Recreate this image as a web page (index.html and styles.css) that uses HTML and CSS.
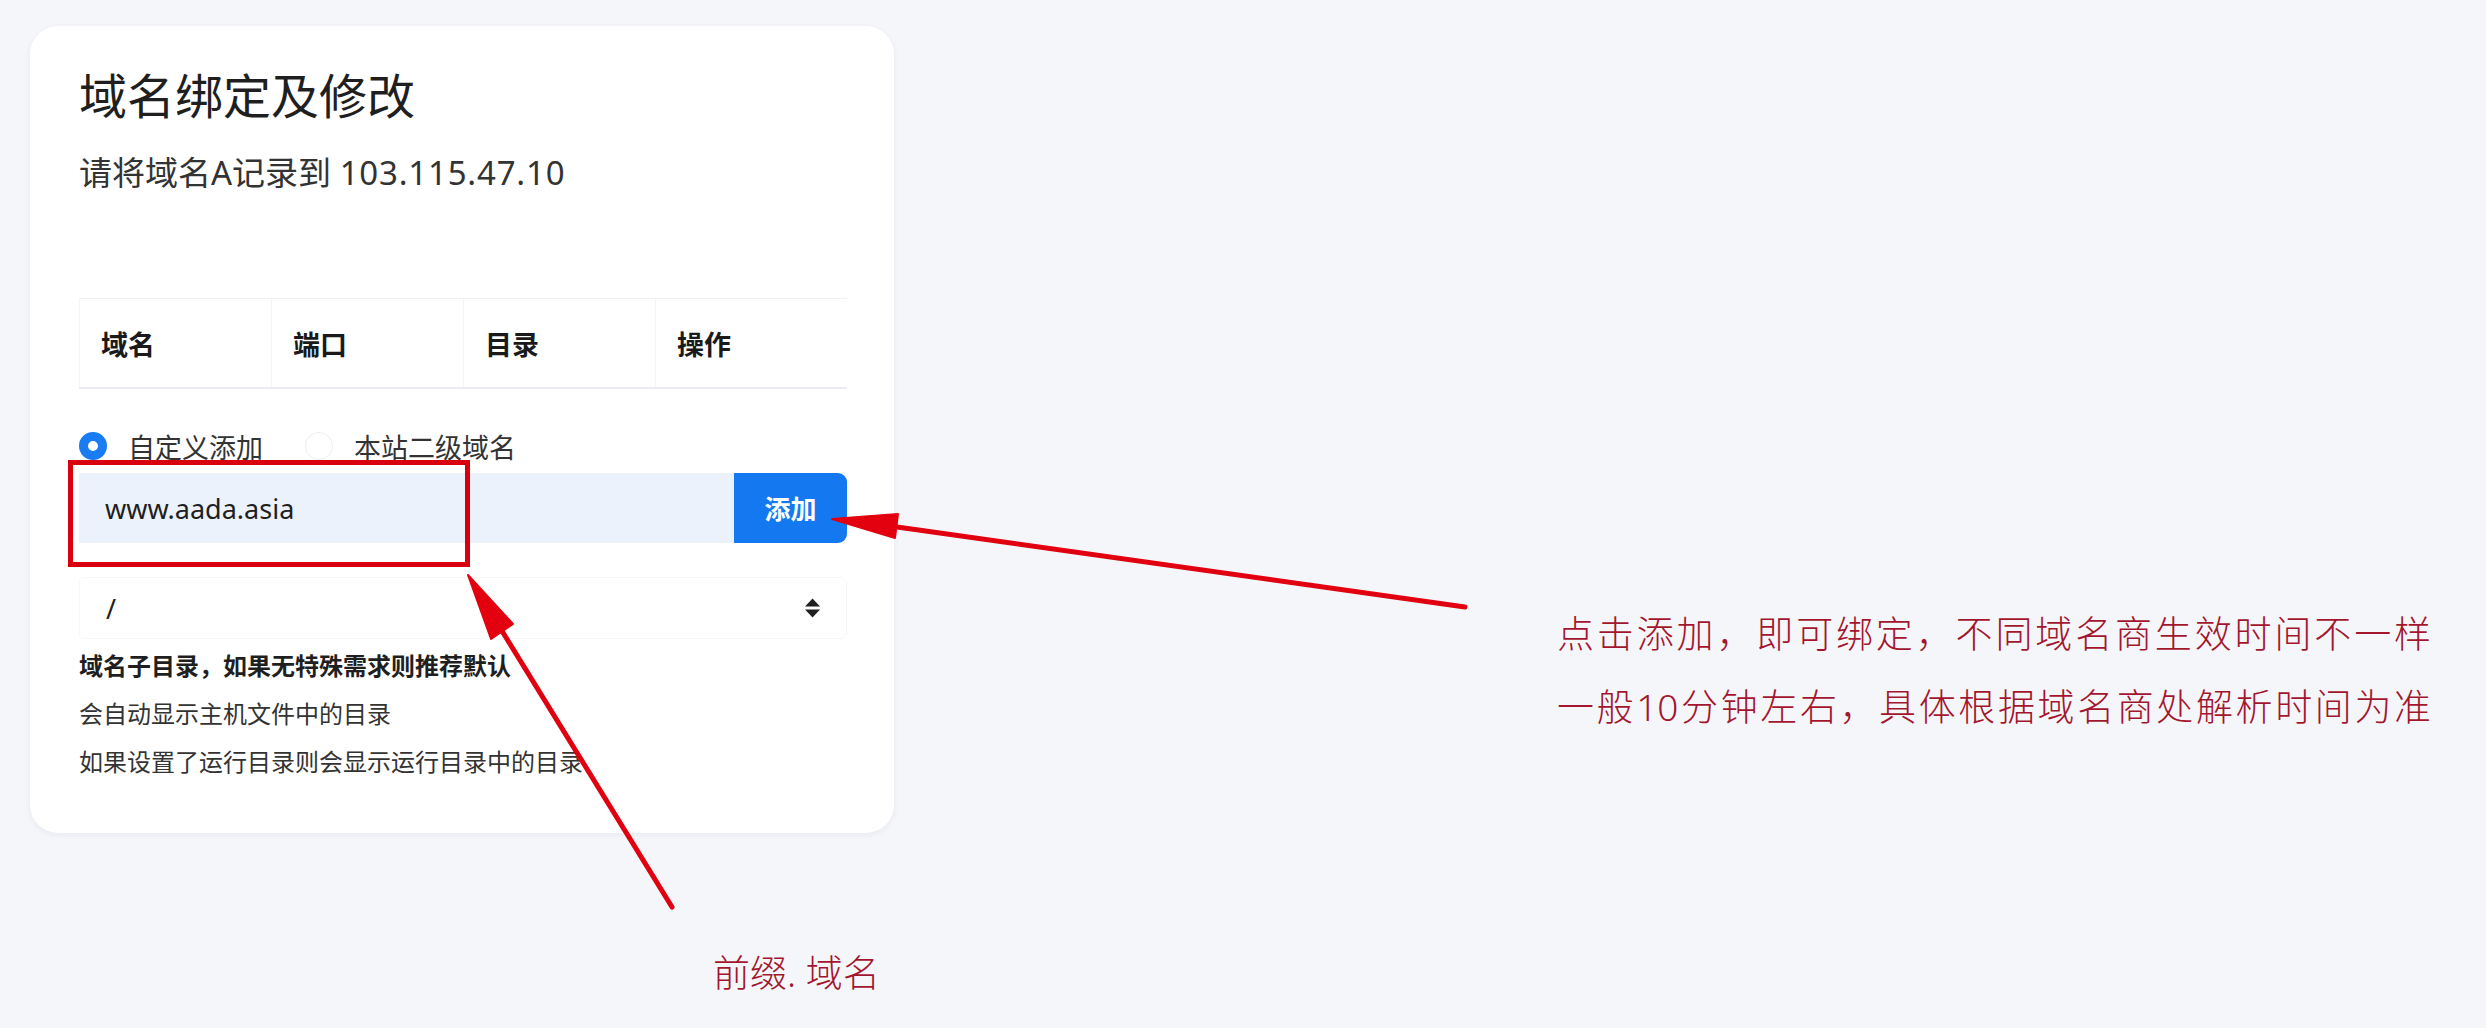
FILE: index.html
```html
<!DOCTYPE html>
<html lang="zh-CN">
<head>
    <meta charset="UTF-8">
    <meta name="viewport" content="width=device-width, initial-scale=1.0">
    <title>域名绑定及修改</title>
    <link rel="stylesheet" href="styles.css">
</head>
<body>
    <div class="card">
        <h1 class="title">域名绑定及修改</h1>
        <p class="subtitle">请将域名A记录到 <span class="ip">103.115.47.10</span></p>
        <div class="table-head">
            <div class="th">域名</div>
            <div class="th">端口</div>
            <div class="th">目录</div>
            <div class="th">操作</div>
        </div>
        <div class="radios">
            <label class="radio checked"><span class="dot"></span>自定义添加</label>
            <label class="radio"><span class="dot"></span>本站二级域名</label>
        </div>
        <div class="add-row">
            <div class="input">www.aada.asia</div>
            <div class="button">添加</div>
        </div>
        <div class="select">
            <span>/</span>
            <svg class="caret" width="17" height="20" viewBox="0 0 17 20">
                <path d="M1 8.5 L8.5 0.5 L16 8.5 Z" fill="#1f1f1f"/>
                <path d="M1 11.5 L16 11.5 L8.5 19.5 Z" fill="#1f1f1f"/>
            </svg>
        </div>
        <div class="help">
            <p class="strong">域名子目录，如果无特殊需求则推荐默认</p>
            <p>会自动显示主机文件中的目录</p>
            <p>如果设置了运行目录则会显示运行目录中的目录</p>
        </div>
    </div>

    <!-- annotations drawn on top of the screenshot -->
    <div class="mark-box"></div>
    <svg class="arrows" width="2486" height="1028" viewBox="0 0 2486 1028">
        <g stroke="#e0000f" stroke-width="5" stroke-linecap="round" fill="none">
            <line x1="1465" y1="607" x2="890" y2="526"/>
            <line x1="672" y1="907" x2="502" y2="631"/>
        </g>
        <g fill="#e3000f" stroke="#e3000f" stroke-width="2" stroke-linejoin="round">
            <polygon points="832,519 898,514 895,538"/>
            <polygon points="468,575 491,639 513,624"/>
        </g>
    </svg>
    <div class="note note-right">
        <p>点击添加，即可绑定，不同域名商生效时间不一样</p>
        <p>一般10分钟左右，具体根据域名商处解析时间为准</p>
    </div>
    <div class="note note-bottom">前缀. 域名</div>
</body>
</html>
```

FILE: styles.css
```css
body {
    margin: 0;
    padding: 0;
    background: #f4f6fa;
    font-family: "Noto Sans", "Noto Sans CJK SC", sans-serif;
    color: #222;
    position: relative;
    width: 2486px;
    height: 1028px;
    overflow: hidden;
}
.card {
    margin: 26px 0 0 30px;
    width: 864px;
    box-sizing: border-box;
    padding: 40px 47px 47px 49px;
    background: white;
    border-radius: 28px;
    box-shadow: 0 2px 6px rgba(20, 40, 80, 0.06);
}
.title {
    margin: 0;
    font-size: 48px;
    line-height: 60px;
    font-weight: 400;
    color: #1f1f1f;
}
.subtitle {
    margin: 27px 0 0;
    font-size: 33px;
    line-height: 40px;
    color: #333;
}
.ip {
    letter-spacing: 0.8px;
}
.table-head {
    margin-top: 105px;
    height: 91px;
    box-sizing: border-box;
    display: grid;
    grid-template-columns: repeat(4, 1fr);
    border-top: 1px solid #f0f1f4;
    border-bottom: 2px solid #ebedf1;
}
.th {
    display: flex;
    align-items: center;
    padding-left: 21px;
    font-size: 27px;
    font-weight: 700;
    color: #1a1a1a;
    border-left: 1px solid #f4f5f7;
}
.radios {
    margin-top: 37px;
    height: 40px;
    display: flex;
    align-items: center;
    gap: 42px;
}
.radio {
    display: flex;
    align-items: center;
    gap: 21px;
    font-size: 27px;
    color: #333;
}
.dot {
    width: 28px;
    height: 28px;
    box-sizing: border-box;
    border-radius: 50%;
    border: 1px solid #eceef1;
}
.radio.checked .dot {
    border: 9px solid #1a7cf2;
    background: white;
}
.add-row {
    margin-top: 7px;
    height: 70px;
    display: flex;
}
.input {
    flex: 1;
    background: #ecf2fc;
    padding-left: 26px;
    display: flex;
    align-items: center;
    font-size: 27px;
    color: #1f1f1f;
}
.button {
    width: 113px;
    background: #1479f0;
    color: white;
    border-radius: 0 9px 9px 0;
    display: flex;
    align-items: center;
    justify-content: center;
    font-size: 26px;
    font-weight: 700;
}
.select {
    margin-top: 34px;
    height: 62px;
    box-sizing: border-box;
    border: 1px solid #f6f7f9;
    border-radius: 6px;
    padding: 0 25px 0 26px;
    display: flex;
    align-items: center;
    justify-content: space-between;
    font-size: 27px;
    color: #222;
}
.help {
    margin-top: 3px;
}
.help p {
    margin: 0;
    font-size: 24px;
    line-height: 48px;
    color: #333;
}
.help p.strong {
    font-weight: 600;
    color: #1f1f1f;
}
.mark-box {
    position: absolute;
    left: 68px;
    top: 460px;
    width: 402px;
    height: 107px;
    box-sizing: border-box;
    border: 5px solid #d8000f;
}
.arrows {
    position: absolute;
    left: 0;
    top: 0;
}
.note {
    position: absolute;
    color: #a3162e;
    font-weight: 300;
}
.note-right {
    left: 1557px;
    top: 597px;
    width: 874px;
}
.note-right p {
    margin: 0;
    font-size: 37px;
    line-height: 73px;
    text-align: justify;
    text-align-last: justify;
}
.note-bottom {
    left: 713px;
    top: 948px;
    font-size: 37px;
    line-height: 50px;
}
```
